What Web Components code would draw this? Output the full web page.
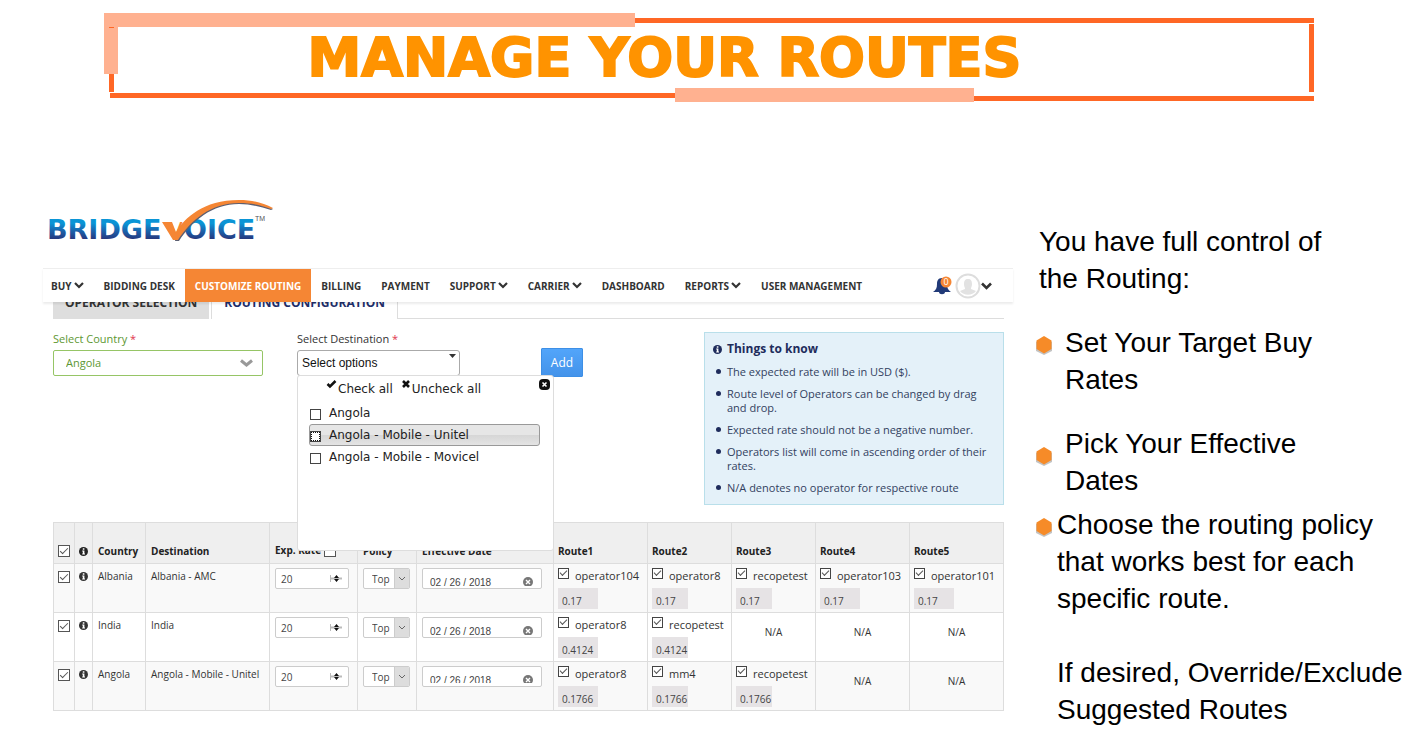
<!DOCTYPE html>
<html lang="en">
<head>
<meta charset="utf-8">
<title>Manage your routes</title>
<style>
  body {
    margin: 0;
    background: #fff;
    color: #333;
    font: 10px/14px "Open Sans", "Noto Sans", sans-serif;
  }
  main {
    display: grid;
    grid-template-columns: minmax(0, 970fr) minmax(0, 408fr);
    padding: 80px 0 0 43px;
  }
</style>
</head>
<body>

<template id="banner-frame">
  <style>
    :host { display: block; position: relative; height: 110px; }
    svg { position: absolute; inset: 0; width: 100%; height: 100%; }
    h1 {
      position: relative;
      margin: 0;
      padding: 26px 92px 0 0;
      text-align: center;
      color: #ff9300;
      font: bold 54px/64px "DejaVu Sans", sans-serif;
      -webkit-text-stroke: 2px #ff9300;
    }
  </style>
  <svg viewBox="0 0 1421 110" preserveAspectRatio="none" shape-rendering="crispEdges" aria-hidden="true">
    <g fill="#ff6725">
      <path d="M635 18h679v5H635zM1309 24h5v68h-5zM109 74h5v18h-5zM110 93h565v5H110zM974 96h340v5H974z"/>
    </g>
    <g fill="#ffb190">
      <path d="M104 13h531v14H104zM104 27h14v47h-14zM675 88h299v14H675z"/>
    </g>
    <path fill="#ff6725" d="M109 27h5v1h-5z"/>
  </svg>
  <h1><slot></slot></h1>
</template>

<template id="brand-logo">
  <style>
    :host { display: block; height: 78px; }
    svg { display: block; overflow: visible; }
    text { font: bold 27px "DejaVu Sans", sans-serif; }
    .check { font-weight: 400; font-size: 23px; }
    .tm { font: 7px "Liberation Sans", sans-serif; }
  </style>
  <svg width="240" height="60" viewBox="0 0 240 60" role="img" aria-label="BridgeVoice">
    <defs>
      <linearGradient id="blue" x1="0" y1="0" x2="0" y2="1">
        <stop offset="0.3" stop-color="#0a95d6"/>
        <stop offset="0.55" stop-color="#1b62ab"/>
        <stop offset="0.8" stop-color="#263a80"/>
      </linearGradient>
    </defs>
    <text y="49" fill="url(#blue)"><tspan x="4">BRIDGE</tspan><tspan class="check" x="124" fill="#f58634">V</tspan><tspan x="141">OICE</tspan></text>
    <path fill="#5c5f72" d="M133 45C141 30 161 12 196 11c14 0 24 3 34 8l-2 1C218 17 208 14 196 14 169 14 149 31 136 51h-4z"/>
    <path fill="#f58634" d="M119 32h10l4 10C142 28 160 10 196 10c14 0 24 3 34 8l-2 1C218 15 208 13 196 13 168 13 148 30 135 50h-5z"/>
    <text class="tm" x="212" y="31" fill="#555">TM</text>
  </svg>
</template>

<template id="menu-bar">
  <style>
    :host {
      display: flex;
      align-items: stretch;
      position: relative;
      z-index: 1;
      height: 34px;
      box-sizing: border-box;
      padding-right: 21px;
      border-top: 1px solid #eee;
      background: #fff;
      box-shadow: 0 2px 2px rgba(0, 0, 0, .08);
    }
    nav { display: flex; flex: 1; }
    .user { display: flex; align-items: center; gap: 2px; }
    button {
      display: flex;
      padding: 0;
      border: 0;
      background: none;
      cursor: pointer;
      align-items: center;
    }
  </style>
  <nav aria-label="Main"><slot></slot></nav>
  <div class="user">
    <button type="button" aria-label="Notifications">
      <svg width="20" height="22" viewBox="0 0 20 22">
        <path fill="#213a78" d="M9 3c4 0 5 3 5 6 0 4 1 6 4 8H0c3-2 4-4 4-8 0-3 1-6 5-6zM6 17h6c0 3-6 3-6 0z" />
        <circle cx="13" cy="7" r="5.5" fill="#f58634"/>
        <text x="13" y="10" text-anchor="middle" fill="#fff" font-family="Open Sans" font-size="9">0</text>
      </svg>
    </button>
    <button type="button" aria-label="Account">
      <svg width="26" height="28" viewBox="0 0 26 28">
        <circle cx="13" cy="14" r="11.5" fill="#fff" stroke="#ddd" stroke-width="2"/>
        <path fill="#e2e2e2" d="M13 7c3 0 4 2 4 5s-1 3-1 5l5 2c-4 5-12 5-16 0l5-2c0-2-1-2-1-5s1-5 4-5z"/>
      </svg>
      <svg width="11" height="8" viewBox="0 0 11 8"><path d="M1 1.5l4.5 4.5L10 1.5" fill="none" stroke="#333" stroke-width="2.6"/></svg>
    </button>
  </div>
</template>

<template id="menu-item">
  <style>
    :host { display: flex; }
    a {
      display: flex;
      align-items: center;
      gap: 2px;
      padding: 0 10px;
      color: #333;
      font-weight: 700;
      text-decoration: none;
      white-space: nowrap;
    }
    :host(:first-child) a { padding-left: 8px; }
    :host([active]) a { background: #f58634; color: #fff; }
    svg { display: none; }
    :host([more]) svg { display: block; }
  </style>
  <a href="#"><slot></slot><svg width="10" height="7" viewBox="0 0 10 7"><path d="M1 1l4 4 4-4" fill="none" stroke="#333" stroke-width="2.2"/></svg></a>
</template>

<template id="tab-strip">
  <style>
    /* the tabs are scrolled half under the menu bar */
    :host {
      display: flex;
      align-items: flex-end;
      margin-top: -15px;
      padding: 0 9px 0 10px;
    }
    button {
      flex: none;
      height: 32px;
      box-sizing: border-box;
      padding: 0 12px;
      border: 0;
      background: #dedede;
      color: #333;
      font: 700 12px/32px "Open Sans", sans-serif;
    }
    button[aria-selected=true] {
      border-right: 1px solid #ddd;
      background: #fff;
      color: #1f2f6b;
    }
    i { width: 3px; height: 32px; box-sizing: border-box; border-right: 1px solid #ddd; }
    span { flex: 1; height: 16px; border-bottom: 1px solid #ddd; }
  </style>
  <button type="button" role="tab" aria-selected="false">OPERATOR SELECTION</button>
  <i></i>
  <button type="button" role="tab" aria-selected="true">ROUTING CONFIGURATION</button>
  <span></span>
</template>

<template id="country-select">
  <style>
    :host { display: block; width: 210px; font-size: 11px; color: #5d9732; }
    label { display: block; margin-bottom: 4px; }
    em { color: #e0344c; font-style: normal; }
    div { display: grid; align-items: center; }
    select, svg { grid-area: 1 / 1; }
    select {
      appearance: none;
      width: 100%;
      height: 26px;
      padding: 0 12px;
      border: 1px solid #96c566;
      border-radius: 2px;
      background: #fff;
      color: inherit;
      font: inherit;
    }
    svg { justify-self: end; margin-right: 10px; pointer-events: none; }
  </style>
  <label for="country">Select Country <em>*</em></label>
  <div>
    <select id="country"><option>Angola</option><option>Albania</option><option>India</option></select>
    <svg width="13" height="8" viewBox="0 0 13 8"><path d="M1 1.5l5.5 4.5L12 1.5" fill="none" stroke="#999" stroke-width="3"/></svg>
  </div>
</template>

<template id="destination-picker">
  <style>
    :host { display: block; position: relative; width: 210px; font-size: 11px; }
    .title { display: block; margin-bottom: 4px; }
    em { color: #e0344c; font-style: normal; }
    button { font: inherit; color: inherit; border: 0; background: none; padding: 0; cursor: pointer; }
    .open {
      display: flex;
      justify-content: space-between;
      width: 163px;
      height: 26px;
      padding: 3px 3px 0 4px;
      border: 1px solid #aaa;
      border-radius: 3px;
      background: #fff;
      color: #111;
      font: 12px/18px "Liberation Sans", sans-serif;
    }
    .menu {
      position: absolute;
      z-index: 2;
      top: 43px;
      left: 0;
      width: 257px;
      height: 176px;
      box-sizing: border-box;
      border: 1px solid #ddd;
      border-radius: 3px;
      background: #fff;
      color: #222;
      font: 12px/20px "DejaVu Sans", sans-serif;
    }
    .head { display: flex; gap: 8px; padding: 3px 3px 0 28px; }
    .head button { display: flex; gap: 1px; }
    .head .close { margin: 0 0 0 auto; }
    ul { margin: 3px 13px 0 11px; padding: 0; list-style: none; }
    li label {
      display: flex;
      align-items: center;
      gap: 8px;
      height: 20px;
      border: 1px solid transparent;
      border-radius: 3px;
    }
    li .hover { border-color: #999; background: linear-gradient(#e6e6e6 50%, #d6d6d6 50%, #e4e4e4); }
    input { appearance: none; width: 11px; height: 11px; margin: 3px 0 0; border: 1px solid #444; background: #fff; }
    .hover input { outline: 1px dotted #111; outline-offset: -2px; }
  </style>
  <label class="title" for="open">Select Destination <em>*</em></label>
  <button class="open" id="open" type="button">Select options
    <svg width="7" height="5" viewBox="0 0 7 5"><path d="M0 0h7L3.5 4z" fill="#333"/></svg>
  </button>
  <div class="menu">
    <div class="head">
      <button type="button"><svg width="11" height="10" viewBox="0 0 11 10"><path d="M1.500 5l2.500 2.500L9.500 2" fill="none" stroke="#111" stroke-width="2.5"/></svg>Check all</button>
      <button type="button"><svg width="10" height="10" viewBox="0 0 10 10"><path d="M2 2l6 6m0-6L2 8" stroke="#111" stroke-width="2.6"/></svg>Uncheck all</button>
      <button class="close" type="button" aria-label="Close"><svg width="11" height="11" viewBox="0 0 11 11"><rect width="11" height="11" rx="4" fill="#111"/><path d="M3.5 3.5l4 4m0-4l-4 4" stroke="#fff" stroke-width="1.6"/></svg></button>
    </div>
    <ul>
      <li><label><input type="checkbox">Angola</label></li>
      <li><label class="hover"><input type="checkbox">Angola - Mobile - Unitel</label></li>
      <li><label><input type="checkbox">Angola - Mobile - Movicel</label></li>
    </ul>
  </div>
</template>

<template id="add-button">
  <style>
    :host { display: block; }
    button {
      width: 42px;
      height: 29px;
      padding: 0;
      border: 1px solid #3d8fe6;
      border-radius: 1px;
      background: linear-gradient(#52a5fa, #4493ea);
      color: #fff;
      font: 12px "Open Sans", sans-serif;
    }
  </style>
  <button type="button"><slot></slot></button>
</template>

<template id="info-box">
  <style>
    :host {
      display: block;
      width: 300px;
      box-sizing: border-box;
      padding: 8px 10px 9px 8px;
      border: 1px solid #b9dfea;
      background: #e4f1f9;
      color: #33415f;
      font-size: 11px;
    }
    h2 { display: flex; align-items: center; gap: 5px; margin: 0 0 8px; color: #1e2c5c; font-size: 12px; line-height: 16px; }
    ul { display: grid; gap: 8px; margin: 0; padding: 0 0 0 14px; list-style: none; }
    ::slotted(li) { position: relative; }
    ::slotted(li)::before {
      content: "";
      position: absolute;
      left: -11px;
      top: 4px;
      width: 5px;
      height: 5px;
      border-radius: 50%;
      background: #1e2c5c;
    }
  </style>
  <h2><info-icon></info-icon>Things to know</h2>
  <ul><slot></slot></ul>
</template>

<template id="info-icon">
  <style>
    :host { display: inline-block; vertical-align: -1px; }
    svg { display: block; }
  </style>
  <svg width="9" height="9" viewBox="0 0 9 9"><circle cx="4.5" cy="4.5" r="4.5" fill="currentColor"/><path d="M3.800 1.300h1.600v1.400H3.800zM3.200 3.600h2.200v3h.6v1H3.200v-1h.6v-2h-.6z" fill="#fff"/></svg>
</template>

<template id="route-table">
  <style>
    :host { display: block; margin: 17px 9px 0 10px; }
    table { width: 100%; border-collapse: collapse; table-layout: fixed; }
    th, td { padding: 0 0 0 5px; border: 1px solid #ddd; text-align: left; white-space: nowrap; }
    th { height: 34px; padding-bottom: 6px; background: #efefef; vertical-align: bottom; line-height: 12px; color: #222; }
    th:nth-child(-n+2), td:nth-child(-n+2), th:nth-child(n+8), td:nth-child(n+8) { padding-left: 4px; }
    td { height: 44px; padding-top: 4px; vertical-align: top; }
    tbody tr:nth-child(odd) { background: #f9f9f9; }
    td.text { height: 43px; padding-top: 5px; }
    td.na { height: 36px; padding: 12px 0 0; text-align: center; }
    input[type=checkbox] {
      appearance: none;
      display: inline-block;
      width: 12px;
      height: 12px;
      margin: 0;
      border: 1px solid #555;
      background: #fff;
      vertical-align: -3px;
    }
    input[type=checkbox]:checked::before {
      content: "";
      display: block;
      width: 8px;
      height: 4px;
      margin: 2px 0 0 1px;
      border: solid #555;
      border-width: 0 0 1px 1px;
      box-sizing: border-box;
      rotate: -45deg;
    }
    .box {
      display: flex;
      align-items: center;
      height: 21px;
      box-sizing: border-box;
      border: 1px solid #ccc;
      border-radius: 2px;
      background: #fff;
      overflow: hidden;
    }
    .box input, .box select { appearance: none; min-width: 0; flex: 1; border: 0; padding: 0; background: none; color: #444; font: inherit; }
    .number { width: 74px; padding: 0 5px; }
    .policy { width: 47px; padding-left: 8px; }
    .policy svg { background: #ddd; border-left: 1px solid #ccc; }
    .date { width: 120px; align-items: flex-start; padding: 0 8px 0 7px; }
    .date span { display: flex; align-items: flex-start; flex: 1; height: 17px; padding-top: 8px; box-sizing: border-box; overflow: hidden; }
    .date input, .date svg { height: 10px; flex-shrink: 0; }
    .date input { width: 80px; font: 10px/10px "Liberation Sans", sans-serif; }
    tr:last-child .date span { height: 16px; }
  </style>
  <table>
    <colgroup></colgroup>
    <thead><tr></tr></thead>
    <tbody></tbody>
  </table>
</template>

<template id="route-operator">
  <style>
    :host { display: block; margin-right: 5px; }
    label { display: flex; align-items: flex-start; gap: 6px; height: 20px; font-size: 11px; line-height: 16px; }
    input[type=checkbox] {
      appearance: none;
      flex: none;
      width: 11px;
      height: 11px;
      margin: 0;
      border: 1px solid #444;
      background: #fff;
    }
    input[type=checkbox]::before {
      content: "";
      display: block;
      width: 7px;
      height: 4px;
      margin: 1px 0 0 1px;
      border: solid #555;
      border-width: 0 0 1px 1px;
      box-sizing: border-box;
      rotate: -45deg;
    }
    .rate {
      display: block;
      width: 48%;
      height: 21px;
      box-sizing: border-box;
      padding: 4px 0 0 4px;
      border: 0;
      background: #e6e3e5;
      color: #444;
      font: inherit;
    }
  </style>
  <label><input type="checkbox" checked><slot></slot></label>
  <input class="rate" aria-label="Rate" readonly>
</template>

<template id="feature-notes">
  <style>
    :host { display: block; padding: 33px 0 19px 23px; color: #000; font: 28px/37px "Liberation Sans", Arial, sans-serif; }
    p { margin: 0 0 27px; }
    .intro { padding-left: 3px; max-width: 300px; }
    ul { margin: 0; padding: 0; list-style: none; }
    li { display: flex; align-items: flex-start; gap: 13px; max-width: 300px; margin-bottom: 27px; --drop: 12px; }
    .late { --drop: 22px; margin-bottom: 7px; }
    .wide { gap: 5px; max-width: 345px; margin-bottom: 37px; }
    p.wide { margin-bottom: 0; padding-left: 21px; max-width: 350px; }
    svg { flex: none; margin-top: var(--drop); }
  </style>
  <p class="intro">You have full control of the Routing:</p>
  <ul></ul>
  <p class="wide">If desired, Override/Exclude Suggested Routes</p>
</template>

<template id="route-form">
  <style>
    :host { display: flex; align-items: flex-start; padding: 13px 9px 0 10px; }
    ::slotted(destination-picker) { margin: 0 34px; }
    ::slotted(add-button) { margin-top: 16px; }
    ::slotted(info-box) { margin-left: auto; }
  </style>
  <slot></slot>
</template>

<banner-frame>MANAGE YOUR ROUTES</banner-frame>

<main>
  <section>
    <brand-logo></brand-logo>
    <menu-bar>
      <menu-item more>BUY</menu-item>
      <menu-item>BIDDING DESK</menu-item>
      <menu-item active>CUSTOMIZE ROUTING</menu-item>
      <menu-item>BILLING</menu-item>
      <menu-item>PAYMENT</menu-item>
      <menu-item more>SUPPORT</menu-item>
      <menu-item more>CARRIER</menu-item>
      <menu-item>DASHBOARD</menu-item>
      <menu-item more>REPORTS</menu-item>
      <menu-item>USER MANAGEMENT</menu-item>
    </menu-bar>
    <tab-strip></tab-strip>
    <route-form>
      <country-select></country-select>
      <destination-picker></destination-picker>
      <add-button>Add</add-button>
      <info-box>
        <li>The expected rate will be in USD ($).</li>
        <li>Route level of Operators can be changed by drag and drop.</li>
        <li>Expected rate should not be a negative number.</li>
        <li>Operators list will come in ascending order of their rates.</li>
        <li>N/A denotes no operator for respective route</li>
      </info-box>
    </route-form>
    <route-table></route-table>
  </section>
  <feature-notes></feature-notes>
</main>

<script>
  (function() {
    let $ = (selector, node = document) => node.querySelector(selector);

    class BaseElement extends HTMLElement {
      constructor() {
        super();
        let content = $(`template#${this.localName}`).content.cloneNode(true);
        this.attachShadow({mode: 'open'}).append(content);
      }
    }

    class RouteOperator extends BaseElement {
      connectedCallback() {
        $('.rate', this.shadowRoot).value = this.getAttribute('rate');
      }
    }

    let columns = [
      [21, '<input type="checkbox" checked aria-label="Select all">'],
      [18, '<info-icon></info-icon>'],
      [53, 'Country'],
      [124, 'Destination'],
      [88, '<label>Exp. Rate <input type="checkbox"></label>'],
      [59, 'Policy'],
      [137, 'Effective Date'],
      [94, 'Route1'],
      [84, 'Route2'],
      [84, 'Route3'],
      [94, 'Route4'],
      [94, 'Route5']
    ];

    let rows = [
      ['Albania', 'Albania - AMC', ['operator104', '0.17'], ['operator8', '0.17'], ['recopetest', '0.17'], ['operator103', '0.17'], ['operator101', '0.17']],
      ['India', 'India', ['operator8', '0.4124'], ['recopetest', '0.4124'], null, null, null],
      ['Angola', 'Angola - Mobile - Unitel', ['operator8', '0.1766'], ['mm4', '0.1766'], ['recopetest', '0.1766'], null, null]
    ];

    let spinner = '<svg width="14" height="9" viewBox="0 0 14 9"><path d="M1 3h12v3H1z" fill="#ddd"/><path d="M1.5 1v7M1 4.5h12" stroke="#bbb"/><path d="M7.5 1l2.500 3h-5zM7.5 8l2.500-3h-5z" fill="#111"/></svg>';
    let arrow = '<svg width="14" height="21" viewBox="0 0 14 21"><path d="M4 9l3 3 3-3" fill="none" stroke="#666"/></svg>';
    let clear = '<svg width="10" height="10" viewBox="0 0 10 10"><circle cx="5" cy="5" r="5" fill="#777"/><path d="M3 3l4 4m0-4L3 7" stroke="#fff" stroke-width="1.4"/></svg>';

    class RouteTable extends BaseElement {
      constructor() {
        super();
        let root = this.shadowRoot;
        $('colgroup', root).innerHTML = columns.map(([w]) => `<col style="width:${w}px">`).join('');
        $('thead tr', root).innerHTML = columns.map(([, title]) => `<th>${title}</th>`).join('');
        $('tbody', root).innerHTML = rows.map(this.renderRow, this).join('');
      }

      renderRow([country, destination, ...routes]) {
        return `<tr>
          <td class="text"><input type="checkbox" checked aria-label="${country}"></td>
          <td class="text"><info-icon></info-icon></td>
          <td class="text">${country}</td>
          <td class="text">${destination}</td>
          <td><div class="box number"><input aria-label="Expected rate" value="20">${spinner}</div></td>
          <td><div class="box policy"><select aria-label="Policy"><option>Top</option></select>${arrow}</div></td>
          <td><div class="box date"><span><input aria-label="Effective date" value="02 / 26 / 2018">${clear}</span></div></td>
          ${routes.map(this.renderRoute).join('')}
        </tr>`;
      }

      renderRoute(route) {
        if (!route) return '<td class="na">N/A</td>';
        return `<td><route-operator rate="${route[1]}">${route[0]}</route-operator></td>`;
      }
    }

    class FeatureNotes extends BaseElement {
      constructor() {
        super();
        let hexagon = '<svg width="16" height="19" viewBox="0 0 16 19"><path d="M8 2l8 4v9l-8 4-8-4V6z" fill="#aaa" opacity=".7"/><path d="M8 0l7.5 4.5v8.5L8 17.5.5 13V4.5z" fill="#f68b28"/></svg>';
        let items = [
          ['', 'Set Your Target Buy Rates'],
          ['late', 'Pick Your Effective Dates'],
          ['wide', 'Choose the routing policy that works best for each specific route.']
        ];
        $('ul', this.shadowRoot).innerHTML = items.map(([name, text]) => `<li class="${name}">${hexagon}<span>${text}</span></li>`).join('');
      }
    }

    ['banner-frame', 'brand-logo', 'menu-bar', 'menu-item', 'tab-strip', 'route-form', 'country-select',
      'destination-picker', 'add-button', 'info-box', 'info-icon'].forEach((name) => {
      customElements.define(name, class extends BaseElement {});
    });
    customElements.define('route-operator', RouteOperator);
    customElements.define('route-table', RouteTable);
    customElements.define('feature-notes', FeatureNotes);
  })();
</script>
</body>
</html>
